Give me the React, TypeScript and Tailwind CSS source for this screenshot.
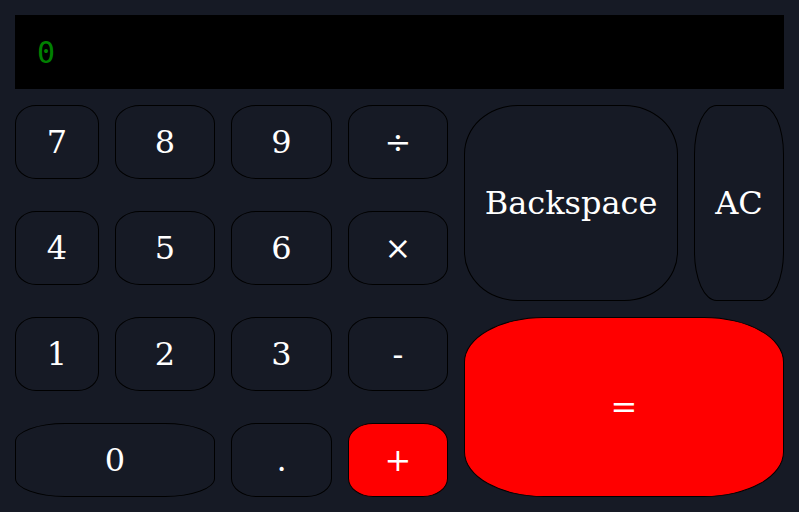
import React from "react";

const btn =
  "flex items-center justify-center border border-black rounded-[25%] text-white text-[32px] [font-family:'DejaVu_Serif',serif] leading-none";

export default function App() {
  const dark = btn + " bg-[#161a25]";
  const red = btn + " bg-[#ff0000]";
  return (
    <div className="w-[799px] h-[512px] bg-[#161a25] p-[15px] flex flex-col gap-[16px]">
      <div className="h-[74px] w-[769px] bg-black flex items-center pl-[22px] text-[30px] text-[#008000] [font-family:'DejaVu_Sans_Mono',monospace]">
        0
      </div>
      <div className="flex gap-[16px]">
        <div className="grid grid-cols-[84px_100px_101px_100px] grid-rows-[74px_74px_74px_74px] gap-x-[16px] gap-y-[32px]">
          <button className={dark}>7</button>
          <button className={dark}>8</button>
          <button className={dark}>9</button>
          <button className={dark}>÷</button>
          <button className={dark}>4</button>
          <button className={dark}>5</button>
          <button className={dark}>6</button>
          <button className={dark}>×</button>
          <button className={dark}>1</button>
          <button className={dark}>2</button>
          <button className={dark}>3</button>
          <button className={dark}>-</button>
          <button className={dark + " col-span-2"}>0</button>
          <button className={dark}>.</button>
          <button className={red}>+</button>
        </div>
        <div className="flex flex-col gap-[16px]">
          <div className="flex gap-[16px]">
            <button className={dark + " w-[214px] h-[196px]"}>Backspace</button>
            <button className={dark + " w-[90px] h-[196px]"}>AC</button>
          </div>
          <button className={red + " w-[320px] h-[180px]"}>=</button>
        </div>
      </div>
    </div>
  );
}
